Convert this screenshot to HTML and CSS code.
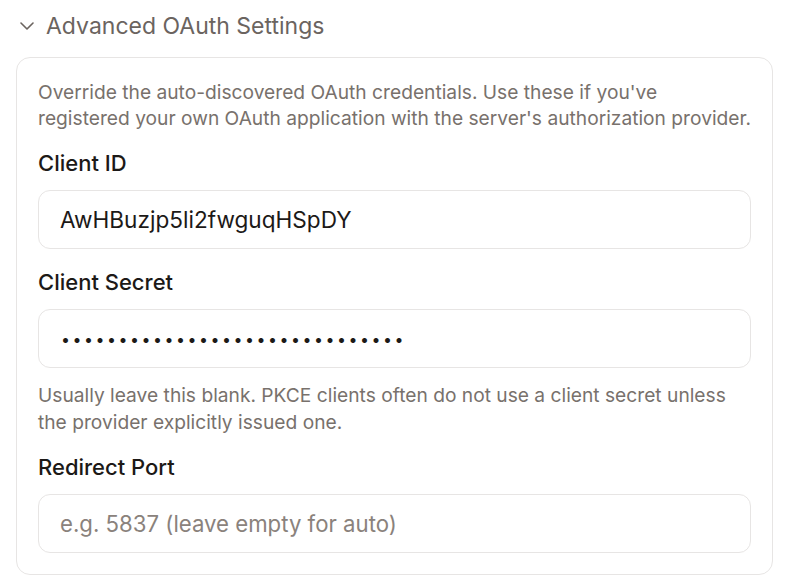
FILE: index.html
```html
<!DOCTYPE html>
<html>
<head>
<meta charset="utf-8">
<link rel="stylesheet" href="styles.css">
</head>
<body>
<div class="section">
  <div class="section-header">
    <svg class="chevron" width="14" height="8" viewBox="0 0 14 8"><path d="M1 1 L7 7 L13 1" fill="none" stroke="#6b645f" stroke-width="1.6" stroke-linecap="round" stroke-linejoin="round"/></svg>
    <span class="section-title">Advanced OAuth Settings</span>
  </div>
  <div class="card">
    <p class="desc">Override the auto-discovered OAuth credentials. Use these if you've<br>registered your own OAuth application with the server's authorization provider.</p>
    <div class="field">
      <label class="label">Client ID</label>
      <div class="input">AwHBuzjp5li2fwguqHSpDY</div>
    </div>
    <div class="field">
      <label class="label">Client Secret</label>
      <div class="input"><span class="dots">••••••••••••••••••••••••••••••</span></div>
      <p class="help">Usually leave this blank. PKCE clients often do not use a client secret unless<br>the provider explicitly issued one.</p>
    </div>
    <div class="field field-last">
      <label class="label">Redirect Port</label>
      <div class="input placeholder">e.g. 5837 (leave empty for auto)</div>
    </div>
  </div>
</div>
</body>
</html>
```
FILE: styles.css
```css
html, body {
  margin: 0;
  padding: 0;
  background: #ffffff;
}
body {
  font-family: Inter, "Noto Sans", sans-serif;
  color: #1c1917;
}
.section {
  padding: 0 14px 0 16px;
}
.section-header {
  display: flex;
  align-items: center;
  height: 52px;
  padding-left: 4px;
  gap: 12px;
}
.chevron {
  flex: none;
}
.section-title {
  font-size: 23px;
  color: #6b645f;
}
.card {
  margin-top: 5px;
  border: 1px solid #e7e5e4;
  border-radius: 14px;
  padding: 21px 21px 21px 21px;
}
.desc {
  margin: 0;
  font-size: 19.2px;
  line-height: 26px;
  color: #78716c;
  white-space: nowrap;
}
.field {
  margin-top: 18px;
}
.field + .field {
  margin-top: 19px;
}
.field + .field-last {
  margin-top: 17px;
}
.label {
  display: block;
  font-size: 22px;
  line-height: 28px;
  font-weight: 500;
  color: #1c1917;
  margin-bottom: 13px;
}
.input {
  height: 57px;
  border: 1px solid #e7e5e4;
  border-radius: 12px;
  padding: 0 21px;
  display: flex;
  align-items: center;
  font-size: 22.6px;
  color: #1c1917;
}
.dots {
  font-size: 16px;
  letter-spacing: 2.5px;
  padding-left: 1px;
}
.placeholder {
  color: #8a827c;
  font-size: 22.2px;
}
.help {
  margin: 14px 0 0 0;
  font-size: 19.2px;
  line-height: 27px;
  color: #78716c;
  white-space: nowrap;
}
```
